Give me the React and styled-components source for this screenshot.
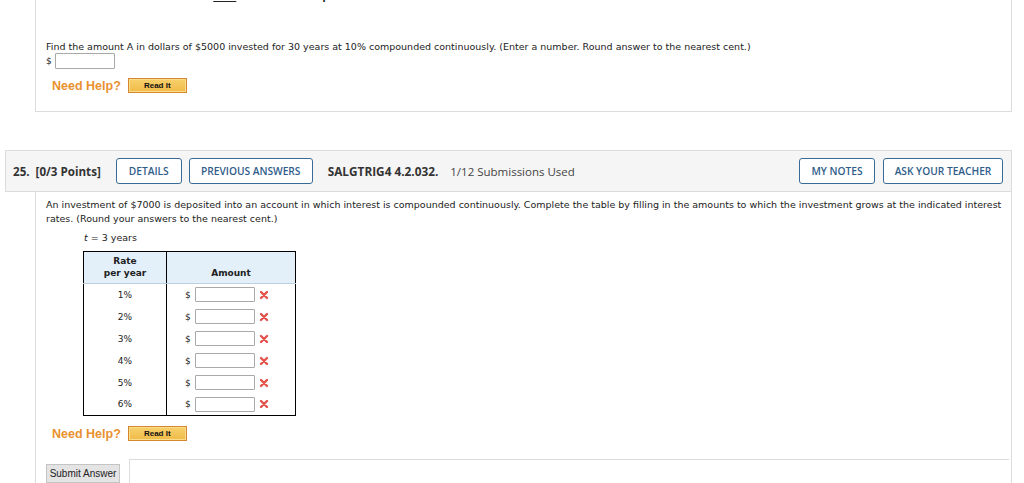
import React from "react";
import styled, { createGlobalStyle } from "styled-components";

const Global = createGlobalStyle`
  html, body { margin: 0; padding: 0; background: #fff; }
  body { overflow: hidden; }
  * { box-sizing: border-box; }
`;

const Page = styled.div`
  width: 1024px;
  height: 483px;
  overflow: hidden;
  padding-left: 5px;
`;

const Column = styled.div`
  width: 1007px;
`;

const verdana = `"DejaVu Sans", Verdana, sans-serif`;
const openSans = `"Open Sans", "Noto Sans", sans-serif`;
const arial = `"Liberation Sans", Arial, sans-serif`;

const Card = styled.div`
  margin-left: 30px;
  border-left: 1px solid #dcdcdc;
  border-right: 1px solid #dcdcdc;
  border-bottom: ${(p) => (p.$open ? "none" : "1px solid #dcdcdc")};
  padding: ${(p) => p.$pad};
`;

const ClipLine = styled.div`
  height: 3px;
  overflow: hidden;
  font-family: ${verdana};
  font-size: 9px;
  font-weight: bold;
  color: #222;
  padding-left: 140px;
  & > span {
    display: block;
    margin-top: -8px;
    line-height: 10px;
  }
`;

const TopGap = styled.div`
  height: 38px;
`;

const Prompt = styled.div`
  font-family: ${verdana};
  font-size: 9.5px;
  line-height: ${(p) => p.$lh || "12px"};
  color: #222;
`;

const AnswerLine = styled.div`
  display: flex;
  align-items: center;
  height: 16px;
  font-family: ${verdana};
  font-size: 9px;
  color: #222;
`;

const TextInput = styled.span`
  display: inline-block;
  width: ${(p) => p.$w || "60px"};
  height: ${(p) => p.$h || "16px"};
  margin-left: ${(p) => p.$ml || "3px"};
  border: 1px solid #a9a9a9;
  border-radius: 1px;
  background: #fff;
`;

const HelpRow = styled.div`
  display: flex;
  align-items: center;
  height: 15px;
  margin-top: ${(p) => p.$mt};
  padding-left: 6px;
`;

const NeedHelp = styled.span`
  font-family: ${arial};
  font-weight: bold;
  font-size: 12.5px;
  color: #e8912f;
  margin-right: 7px;
`;

const ReadIt = styled.span`
  display: inline-flex;
  align-items: center;
  justify-content: center;
  width: 59px;
  height: 15px;
  border: 1px solid #d6862c;
  background: linear-gradient(#f7d06c, #f1bb48);
  box-shadow: inset 0 0 0 1px #f9dc8c;
  font-family: ${arial};
  font-weight: bold;
  font-size: 8px;
  color: #111;
`;

const Header = styled.div`
  margin-top: 38px;
  height: 42px;
  display: flex;
  align-items: center;
  background: #f5f5f5;
  border: 1px solid #dcdcdc;
  padding: 0 8px 0 7px;
  font-family: ${openSans};
  color: #333;
`;

const QNum = styled.span`
  font-weight: 700;
  font-size: 11.6px;
  margin-right: 15px;
  white-space: pre;
`;

const OutlineBtn = styled.span`
  display: inline-flex;
  align-items: center;
  justify-content: center;
  height: 26px;
  width: ${(p) => p.$w};
  margin-right: ${(p) => p.$mr || "0"};
  border: 1.5px solid #3a6b98;
  border-radius: 3px;
  background: #fff;
  color: #2f5d8a;
  font-family: ${openSans};
  font-weight: 600;
  font-size: 10.2px;
`;

const Code = styled.span`
  font-weight: 700;
  font-size: 11.8px;
  margin-left: 15px;
`;

const Subs = styled.span`
  font-size: 11.5px;
  margin-left: 12px;
  color: #444;
`;

const Spacer = styled.span`
  flex: 1;
`;

const TLine = styled.div`
  font-family: ${verdana};
  font-size: 9.5px;
  line-height: 14px;
  color: #222;
  margin-top: 5px;
  padding-left: 38px;
  i { font-style: italic; }
`;

const Table = styled.table`
  margin-top: 6px;
  margin-left: 37px;
  border-collapse: collapse;
  border: 1px solid #000;
  font-family: ${verdana};
  font-size: 9px;
  color: #222;
`;

const Th = styled.th`
  background: #e3f0fa;
  border: 1px solid #000;
  border-bottom: 1px solid #bcd0e0;
  height: 32px;
  width: ${(p) => p.$w};
  font-weight: bold;
  font-size: 9px;
  line-height: 12px;
  padding: 0;
  vertical-align: bottom;
  padding-bottom: 4px;
`;

const Td = styled.td`
  height: 22px;
  padding: 0;
  text-align: ${(p) => (p.$center ? "center" : "left")};
  border-right: 1px solid #000;
  padding-left: ${(p) => (p.$center ? "0" : "18px")};
`;

const AmountCell = styled.span`
  display: flex;
  align-items: center;
`;

const XMark = styled.svg`
  width: 10px;
  height: 10px;
  margin-left: 4px;
`;

const SubmitRow = styled.div`
  display: flex;
  margin-top: 18px;
`;

const SubmitBtn = styled.span`
  margin-top: 5px;
  display: inline-flex;
  align-items: center;
  justify-content: center;
  width: 74px;
  height: 19px;
  background: #e4e4e4;
  border: 1px solid #c4c4c4;
  font-family: ${arial};
  font-size: 10px;
  color: #222;
`;

const Box = styled.div`
  flex: 1;
  margin-left: 9px;
  height: 40px;
  border-top: 1px solid #dcdcdc;
  border-left: 1px solid #dcdcdc;
`;

const Cross = () => (
  <XMark viewBox="0 0 10 10">
    <path d="M2 2 L8 8 M8 2 L2 8" stroke="#e2514a" strokeWidth="2.4" strokeLinecap="round" />
  </XMark>
);

const rates = ["1%", "2%", "3%", "4%", "5%", "6%"];

export default function App() {
  return (
    <Page>
      <Global />
      <Column>
        <Card $pad="0 10px 18px 10px">
          <ClipLine>
            <span>
              Click <u>here</u> to view an example.
            </span>
          </ClipLine>
          <TopGap />
          <Prompt>
            Find the amount A in dollars of $5000 invested for 30 years at 10% compounded continuously. (Enter a number. Round answer to the nearest cent.)
          </Prompt>
          <AnswerLine>
            $<TextInput $w="60px" $h="16px" />
          </AnswerLine>
          <HelpRow $mt="9px">
            <NeedHelp>Need Help?</NeedHelp>
            <ReadIt>Read It</ReadIt>
          </HelpRow>
        </Card>

        <Header>
          <QNum>25.  [0/3 Points]</QNum>
          <OutlineBtn $w="66px" $mr="7px">DETAILS</OutlineBtn>
          <OutlineBtn $w="124px">PREVIOUS ANSWERS</OutlineBtn>
          <Code>SALGTRIG4 4.2.032.</Code>
          <Subs>1/12 Submissions Used</Subs>
          <Spacer />
          <OutlineBtn $w="76px" $mr="8px">MY NOTES</OutlineBtn>
          <OutlineBtn $w="120px">ASK YOUR TEACHER</OutlineBtn>
        </Header>

        <Card $open $pad="6px 2px 0 10px">
          <Prompt $lh="14px">
            An investment of $7000 is deposited into an account in which interest is compounded continuously. Complete the table by filling in the amounts to which the investment grows at the indicated interest rates. (Round your answers to the nearest cent.)
          </Prompt>
          <TLine>
            <i>t</i> = 3 years
          </TLine>
          <Table>
            <thead>
              <tr>
                <Th $w="83px">
                  Rate
                  <br />
                  per year
                </Th>
                <Th $w="129px">Amount</Th>
              </tr>
            </thead>
            <tbody>
              {rates.map((r) => (
                <tr key={r}>
                  <Td $center>{r}</Td>
                  <Td>
                    <AmountCell>
                      $<TextInput $w="60px" $h="15px" $ml="4px" />
                      <Cross />
                    </AmountCell>
                  </Td>
                </tr>
              ))}
            </tbody>
          </Table>
          <HelpRow $mt="10px">
            <NeedHelp>Need Help?</NeedHelp>
            <ReadIt>Read It</ReadIt>
          </HelpRow>
          <SubmitRow>
            <SubmitBtn>Submit Answer</SubmitBtn>
            <Box />
          </SubmitRow>
        </Card>
      </Column>
    </Page>
  );
}
